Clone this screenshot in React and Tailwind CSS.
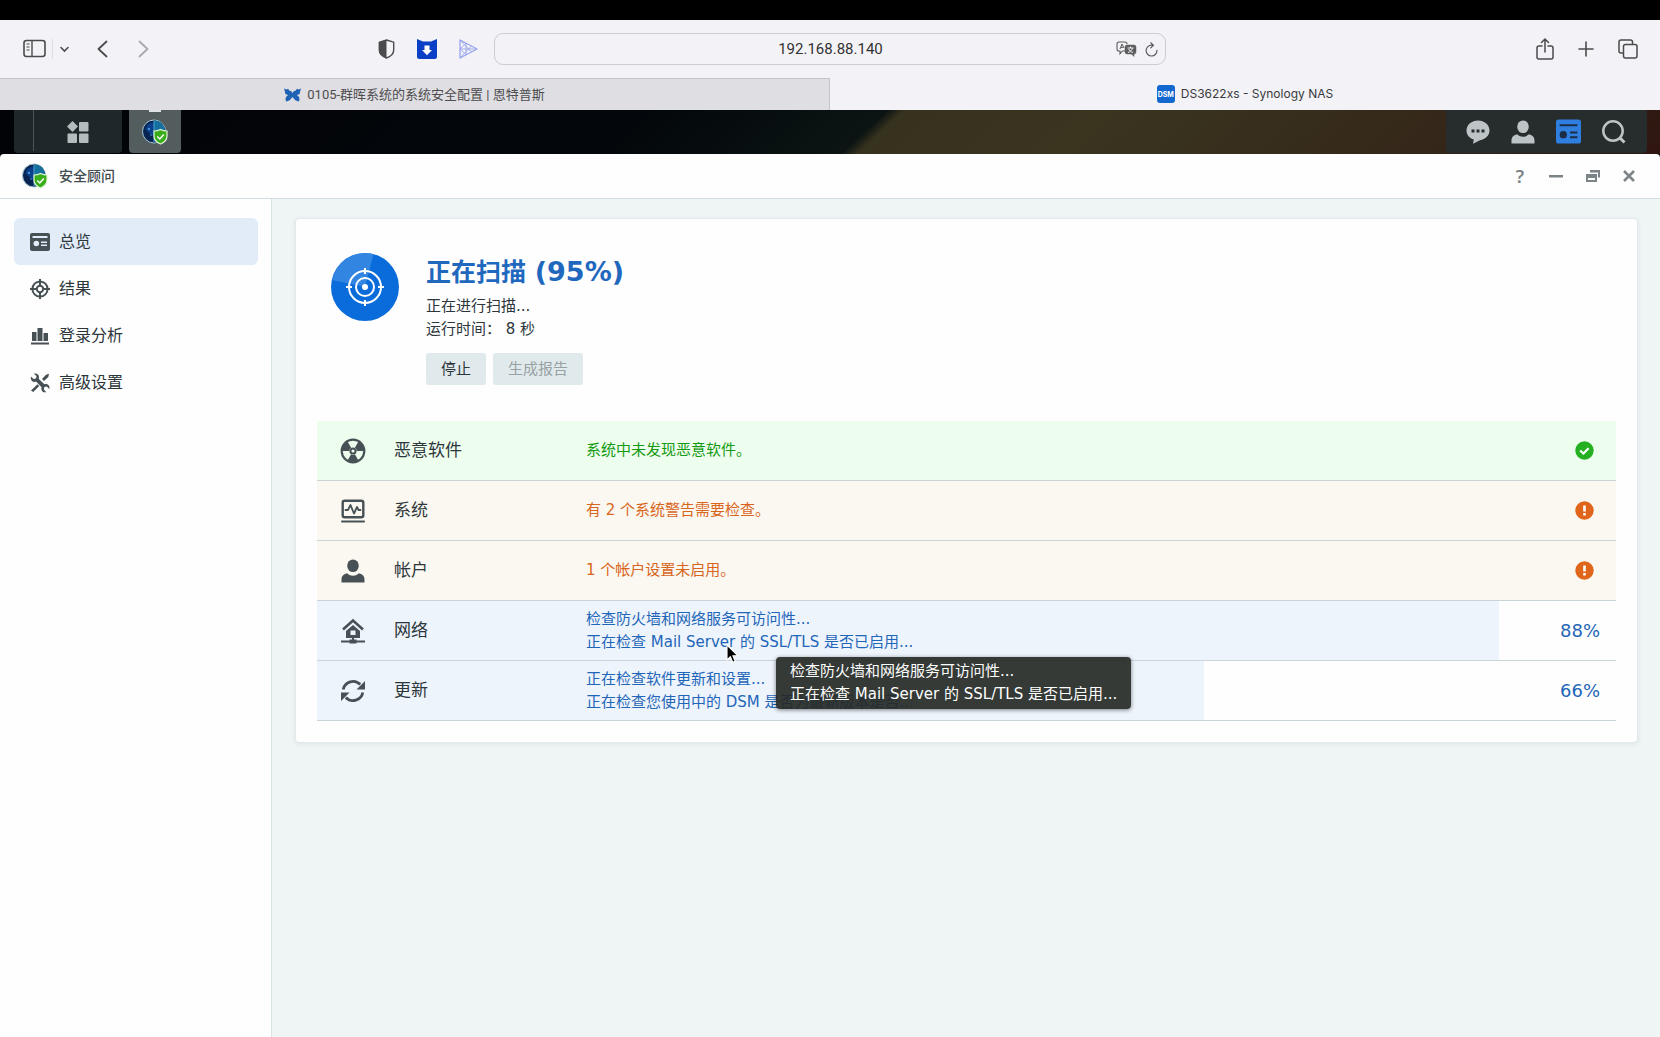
import { useState } from "react";

const SANS = "font-['DejaVu_Sans','Noto_Sans_CJK_SC',sans-serif]";
const UI = "font-['Roboto','Noto_Sans_CJK_SC',sans-serif]";

function SidebarToggleIcon() {
  return (
    <svg width="24" height="20" viewBox="0 0 24 20" fill="none" stroke="#4b4b4d">
      <rect x="1" y="1.5" width="21" height="16" rx="2.5" strokeWidth="1.6" />
      <path d="M9 2v15" strokeWidth="1.4" />
      <path d="M3.5 5h3M3.5 8h3M3.5 11h3" strokeWidth="1.1" />
    </svg>
  );
}

function ChevronIcon({ direction }) {
  const paths = {
    left: "M9.5 1.5L1.5 9l8 7.500",
    right: "M1.5 1.5L9.5 9l-8 7.500",
  };

  return (
    <svg width="11" height="18" viewBox="0 0 11 18" fill="none" stroke="currentColor" strokeWidth="1.8" strokeLinecap="round" strokeLinejoin="round">
      <path d={paths[direction]} />
    </svg>
  );
}

function ShieldHalfIcon() {
  return (
    <svg width="17" height="20" viewBox="0 0 17 20">
      <path d="M8.5 1L15.7 3.2V11c0 4-3.2 6.5-7.2 8-4-1.5-7.2-4-7.2-8V3.2z" fill="#f3f2f6" stroke="#4b4b4d" strokeWidth="1.4" />
      <path d="M8.5 1v18c-4-1.5-7.2-4-7.2-8V3.200z" fill="#4b4b4d" />
    </svg>
  );
}

function DownloaderIcon() {
  return (
    <svg width="20" height="20" viewBox="0 0 20 20">
      <path d="M0 0l6 2.5h8L20 0v17.5a2.5 2.5 0 0 1-2.5 2.5h-15A2.5 2.5 0 0 1 0 17.500z" fill="#0b3fc6" />
      <path d="M7.5 6.500h5v4.500h2.500L10 16.200 5 11h2.500z" fill="#fff" />
    </svg>
  );
}

function MeshPlayIcon() {
  return (
    <svg width="19" height="20" viewBox="0 0 19 20" fill="none" stroke="#97a5ec" strokeLinejoin="round">
      <path d="M1 1l17 9L1 19z" strokeWidth="1.3" />
      <path d="M1 10h17M7 4.200v11.600M1 1l11.500 12M1 19L12.500 7M1 10l6-5.800M1 10l6 5.800" strokeWidth="0.9" />
    </svg>
  );
}

function TranslateIcon() {
  return (
    <svg width="21" height="16" viewBox="0 0 21 16" fill="none" stroke="#5c5c5e">
      <path d="M9 10H6.5L4 12.8V10H3a2 2 0 0 1-2-2V3a2 2 0 0 1 2-2h6a2 2 0 0 1 2 2" strokeWidth="1.1" />
      <path d="M4 8l2-5 2 4M4.8 6.3h2.400" strokeWidth="1" />
      <path d="M11 4h7a2 2 0 0 1 2 2v5a2 2 0 0 1-2 2v2.5L15.5 13H11a2 2 0 0 1-2-2V6a2 2 0 0 1 2-2z" fill="#5c5c5e" strokeWidth="0.5" />
      <path d="M11.5 7h6M14.5 5.5V7M16.5 7c-.5 2-2.5 4-4.5 4.5M12.7 8c.8 1.7 2.3 3 4.3 3.500" stroke="#f3f2f6" strokeWidth="1" />
    </svg>
  );
}

function ReloadIcon() {
  return (
    <svg width="13" height="15" viewBox="0 0 13 15" fill="none" stroke="#5c5c5e" strokeWidth="1.2" strokeLinecap="round">
      <path d="M11.9 8.300A5.400 5.400 0 1 1 6.500 3.200h1.700M5.800.8l2.600 2.400-2.600 2.600" />
    </svg>
  );
}

function ShareIcon() {
  return (
    <svg width="18" height="22" viewBox="0 0 18 22" fill="none" stroke="#4b4b4d" strokeWidth="1.5" strokeLinecap="round" strokeLinejoin="round">
      <path d="M6 8H3a2 2 0 0 0-2 2v9a2 2 0 0 0 2 2h12a2 2 0 0 0 2-2v-9a2 2 0 0 0-2-2h-3M9 14V1M5.5 4.5L9 1l3.500 3.500" />
    </svg>
  );
}

function PlusIcon() {
  return (
    <svg width="16" height="16" viewBox="0 0 16 16" stroke="#4b4b4d" strokeWidth="1.6" strokeLinecap="round">
      <path d="M8 1v14M1 8h14" />
    </svg>
  );
}

function TabsIcon() {
  return (
    <svg width="20" height="20" viewBox="0 0 20 20" fill="none" stroke="#4b4b4d" strokeWidth="1.5">
      <path d="M5 14H3a2 2 0 0 1-2-2V3a2 2 0 0 1 2-2h9.500a2 2 0 0 1 2 2v2" />
      <rect x="5.5" y="5.5" width="13.5" height="13.5" rx="2" />
    </svg>
  );
}

function ButterflyIcon() {
  return (
    <svg width="17" height="14" viewBox="0 0 17 14" fill="#2062b4">
      <path d="M0 .5l2.500 1L4 .8l1.500 2L7 3l1.500 2L10 3l1.500-.2L13 .8l1.500.7L17 .5l-1 3.500-.3 2L13 7l2 2 .5 2-.5 2.500-2-.5-2-1-2.500-3L6 12l-2 1-2 .5L1.500 11 2 9l2-2-2.700-1L1 4z" />
    </svg>
  );
}

function AdvisorIcon() {
  return (
    <svg width="26" height="26" viewBox="0 0 26 26">
      <circle cx="12" cy="12.5" r="11.5" fill="#082450" stroke="#a9c6d2" strokeWidth="1" />
      <path d="M12 1.500a11 11 0 0 1 0 22z" fill="#0a4a7c" />
      <path d="M12 1.500a11 11 0 0 1 11 11H12z" fill="#15709f" />
      <path d="M12 3.500a9 9 0 0 0-8.500 7L12 18z" fill="#0c3f8c" />
      <path d="M12 1.500v22" stroke="#5cb4dc" strokeWidth="0.8" />
      <circle cx="7" cy="10" r="0.9" fill="#5fc4f5" />
      <circle cx="9" cy="16" r="0.8" fill="#4d9fe0" />
      <path d="M18.5 10.500c2 1 4 1.500 6.500 1.500v5c0 4-2.500 6.500-6.500 8-4-1.500-6.500-4-6.500-8v-5c2.500 0 4.500-.5 6.500-1.500z" fill="#3aad1a" stroke="#dff5d5" strokeWidth="1.2" />
      <path d="M15.3 17.500l2.500 2.500 4-4.500" fill="none" stroke="#fff" strokeWidth="1.5" />
    </svg>
  );
}

function AppsIcon() {
  return (
    <svg width="22" height="22" viewBox="0 0 22 22" fill="#b4bcbe">
      <path d="M5.500 0L11 5.500 5.500 11 0 5.500z" />
      <rect x="12" y="1" width="9.5" height="9.5" rx="1" />
      <rect x="0.5" y="12.5" width="9.5" height="9.5" rx="1" />
      <rect x="12" y="12.5" width="9.5" height="9.5" rx="1" />
    </svg>
  );
}

function ChatIcon() {
  return (
    <svg width="24" height="24" viewBox="0 0 24 24">
      <path d="M12 .5c6.300 0 11.500 4.300 11.500 10 0 5-4 8.500-9.500 9.700L7 23.700l.8-4.200C3.500 18.200.5 15 .5 10.500c0-5.700 5.200-10 11.500-10z" fill="#bcc4c6" />
      <path d="M5.500 9.500h3v3h-3zM10.500 9.500h3v3h-3zM15.500 9.500h3v3h-3z" fill="#272d2d" />
    </svg>
  );
}

function UserIcon({ size = 24 }) {
  return (
    <svg width={size} height={size} viewBox="0 0 24 24" fill="currentColor">
      <ellipse cx="12" cy="6.8" rx="5.8" ry="6.3" />
      <path d="M.5 23.500v-3c0-3.500 2.500-6 6-6 1.500 1.500 3.300 2.200 5.500 2.200s4-.7 5.500-2.200c3.500 0 6 2.500 6 6v3z" />
    </svg>
  );
}

function DashboardIcon() {
  return (
    <svg width="25" height="25" viewBox="0 0 24 24">
      <rect x="0" y="0.5" width="24" height="23" rx="2.5" fill="#2f7fe0" />
      <path d="M3.500 5h17v2h-17zM13.500 12h7v2h-7zM13.500 16.500h7v2h-7z" fill="#1c2c45" />
      <circle cx="7" cy="15" r="3.5" fill="#1c2c45" />
    </svg>
  );
}

function SearchIcon() {
  return (
    <svg width="24" height="24" viewBox="0 0 24 24" fill="none" stroke="#bcc4c6" strokeWidth="2.5">
      <circle cx="11" cy="11" r="9.7" />
      <path d="M17.500 17.500l5 5" strokeWidth="3" />
    </svg>
  );
}

function OverviewIcon() {
  return (
    <svg width="20" height="18" viewBox="0 0 20 18">
      <rect width="20" height="18" rx="2" fill="#465055" />
      <path d="M2.500 3h15v2h-15z" fill="#e1ecf8" />
      <circle cx="6.3" cy="10.5" r="2.8" fill="#e1ecf8" />
      <path d="M11 8.500h6V10h-6zM11 11.500h6V13h-6z" fill="#e1ecf8" />
    </svg>
  );
}

function TargetIcon() {
  return (
    <svg width="20" height="20" viewBox="0 0 20 20" fill="none" stroke="#465055" strokeWidth="2">
      <circle cx="10" cy="10" r="7.6" />
      <circle cx="10" cy="10" r="3.2" />
      <path d="M10 0v6M10 14v6M0 10h6M14 10h6" />
    </svg>
  );
}

function ChartIcon() {
  return (
    <svg width="20" height="18" viewBox="0 0 20 18" fill="#465055">
      <path d="M2 5h4.500v9H2zM7.500 1h5v13h-5zM13.500 6H18v8h-4.500zM1 15.500h18v2H1z" />
    </svg>
  );
}

function ToolsIcon() {
  return (
    <svg width="20" height="20" viewBox="0 0 20 20" fill="#465055">
      <path d="M1 3.500L3.500 6 6 5.500 6.500 3 4 .8C6.500 0 9 1.500 9 4.200c0 .6-.1 1-.3 1.500l5.600 5.600c.5-.2 1-.3 1.500-.3 2.800 0 4.200 2.500 3.500 5L16.800 13.500l-2.500.5-.5 2.500 2.500 2.700c-2.500.7-5-.8-5-3.500 0-.5.100-1 .300-1.500L6 8.600c-.5.2-1 .3-1.500.3C1.800 8.900.3 6.200 1 3.500z" />
      <path d="M12 6l4-4.300L19 .8 18.300 4 14 8zM7.500 11.300l1.700 1.700-6 6-2.200-1.500z" />
    </svg>
  );
}

function RadiationIcon() {
  return (
    <svg width="26" height="26" viewBox="0 0 26 26">
      <circle cx="13" cy="13" r="11.3" fill="none" stroke="#465055" strokeWidth="2.2" />
      <path d="M9.200 12.900L2.300 13A10.700 10.700 0 0 1 7.700 3.800L11.100 9.800A3.800 3.800 0 0 0 9.200 12.900zM14.900 9.800L18.300 3.800A10.700 10.700 0 0 1 23.700 13H16.800A3.800 3.800 0 0 0 14.900 9.800zM14.900 16.300l3.400 6a10.700 10.700 0 0 1-10.600 0l3.400-6a3.800 3.800 0 0 0 3.800 0z" fill="#465055" />
      <circle cx="13" cy="13" r="2.6" fill="none" stroke="#465055" strokeWidth="2" />
    </svg>
  );
}

function MonitorIcon() {
  return (
    <svg width="24" height="24" viewBox="0 0 24 24" fill="none" stroke="#465055" strokeLinejoin="round" strokeLinecap="round">
      <rect x="1.7" y="1.7" width="20.6" height="16.6" rx="2" strokeWidth="2.4" />
      <path d="M4.500 11H7l2.500-5 3.500 8.500L16 8l1.500 3h2" strokeWidth="1.8" />
      <path d="M1 22.500h22" strokeWidth="2" />
    </svg>
  );
}

function HomeNetworkIcon() {
  return (
    <svg width="24" height="26" viewBox="0 0 24 26">
      <path d="M2 11.500L12 2.500l10 9" fill="none" stroke="#465055" strokeWidth="2.6" />
      <path d="M12 7l7 6v7H5v-7z" fill="#465055" />
      <rect x="9.5" y="12.5" width="5" height="4.5" fill="#edf4fc" />
      <path d="M11 19h2v3.500h-2zM0 22.500h24v2H0zM8.500 21.500h7v4h-7z" fill="#465055" />
    </svg>
  );
}

function RefreshIcon() {
  return (
    <svg width="24" height="24" viewBox="0 0 24 24">
      <path d="M2.200 10.500a10 10 0 0 1 17-5M21.800 13.500a10 10 0 0 1-17 5" fill="none" stroke="#465055" strokeWidth="2.8" />
      <path d="M24 2v8.500h-8.500zM0 22v-8.500h8.500z" fill="#465055" />
    </svg>
  );
}

function OkIcon() {
  return (
    <svg width="19" height="19" viewBox="0 0 19 19" role="img" aria-label="安全">
      <circle cx="9.5" cy="9.5" r="9.2" fill="#25b022" />
      <path d="M5.200 9.500l3.200 3 5.200-5.300" fill="none" stroke="#fff" strokeWidth="2.2" />
    </svg>
  );
}

function WarningIcon() {
  return (
    <svg width="19" height="19" viewBox="0 0 19 19" role="img" aria-label="警告">
      <circle cx="9.5" cy="9.5" r="9.2" fill="#df651a" />
      <path d="M8.200 4.500h2.600v6H8.200zM8.200 12h2.600v2.500H8.200z" fill="#fff" />
    </svg>
  );
}

function ScanIcon() {
  return (
    <svg width="68" height="68" viewBox="0 0 68 68">
      <circle cx="34" cy="34" r="34" fill="#0a6cdb" />
      <path d="M34 34L1 27A34 34 0 0 1 42.500 1.100z" fill="#3385e2" />
      <g fill="none" stroke="#fff" strokeWidth="2">
        <circle cx="34" cy="34" r="16" />
        <circle cx="34" cy="34" r="9" />
        <path d="M34 15v6M34 47v6M15 34h6M47 34h6" />
      </g>
      <circle cx="34" cy="34" r="3" fill="#fff" />
    </svg>
  );
}

function CursorIcon() {
  return (
    <svg width="13" height="20" viewBox="0 0 13 20">
      <path d="M1 1v15l3.400-3.200 2.300 5.500 2.500-1-2.300-5.500H12z" fill="#000" stroke="#fff" strokeWidth="1.1" />
    </svg>
  );
}

function BrowserToolbar() {
  const [address, setAddress] = useState("192.168.88.140");

  return (
    <header className="grid h-[58px] grid-cols-[1fr_40.5%_1fr] items-center bg-[#f3f2f6]">
      <div className="flex items-center justify-between pl-[23px] pr-4">
        <div className="flex items-center">
          <button aria-label="边栏">
            <SidebarToggleIcon />
          </button>
          <button aria-label="标签页组" className="ml-[5px] flex h-5 items-center border-l border-[#dedde1] pl-[7px]">
            <svg width="9" height="7" viewBox="0 0 9 7" fill="none" stroke="#4b4b4d" strokeWidth="1.6" strokeLinecap="round">
              <path d="M1 1.500l3.500 3.500L8 1.500" />
            </svg>
          </button>
          <button aria-label="后退" className="ml-7 text-[#4b4b4d]">
            <ChevronIcon direction="left" />
          </button>
          <button aria-label="前进" className="ml-[30px] text-[#a9a8ac]">
            <ChevronIcon direction="right" />
          </button>
        </div>
        <div className="flex items-center gap-[22px]">
          <button aria-label="隐私报告">
            <ShieldHalfIcon />
          </button>
          <button aria-label="下载扩展">
            <DownloaderIcon />
          </button>
          <button aria-label="播放扩展">
            <MeshPlayIcon />
          </button>
        </div>
      </div>
      <div className="flex h-8 items-center gap-2 rounded-[9px] border border-[#cdccd0] pl-[58px] pr-[7px]">
        <input
          aria-label="地址"
          className="min-w-0 flex-1 bg-transparent text-center text-[15px] text-[#333335] outline-none"
          value={address}
          onChange={(event) => setAddress(event.target.value)}
        />
        <button aria-label="翻译">
          <TranslateIcon />
        </button>
        <button aria-label="重新载入">
          <ReloadIcon />
        </button>
      </div>
      <div className="flex items-center justify-end gap-6 pr-[22px]">
        <button aria-label="共享">
          <ShareIcon />
        </button>
        <button aria-label="新建标签页">
          <PlusIcon />
        </button>
        <button aria-label="标签页概览">
          <TabsIcon />
        </button>
      </div>
    </header>
  );
}

function BrowserTabs() {
  return (
    <nav className="grid h-8 grid-cols-2 text-[13px] leading-none">
      <button className="flex items-center justify-center gap-[6px] border-r border-t border-[#c4c3c7] bg-[#dfdee2] text-[#4d4d4f]">
        <ButterflyIcon />
        <span>0105-群晖系统的系统安全配置 | 恩特普斯</span>
      </button>
      <button className="flex items-center justify-center gap-[6px] bg-[#f3f2f6] font-['Inter',sans-serif] text-[12px] text-[#3a3a3c]">
        <span className="flex h-[18px] w-[18px] items-center justify-center rounded-[3px] bg-[#1268cf] text-[7px] font-bold text-white">
          DSM
        </span>
        <span>DS3622xs - Synology NAS</span>
      </button>
    </nav>
  );
}

function Taskbar() {
  return (
    <div className="flex h-11 justify-between bg-[linear-gradient(137deg,#020307_0%,#03070b_38%,#0b1413_52%,#37321e_53%,#39351f_65%,#35281a_85%,#2f1510_100%)] pl-[14px] pr-[13px]">
      <div className="flex gap-[7px]">
        <div className="flex h-[43px] w-[108px] rounded-b-sm bg-[#20272a]">
          <div className="mb-0.5 w-5 border-r border-[#4c5356]" />
          <button aria-label="主菜单" className="flex flex-1 items-center justify-center">
            <AppsIcon />
          </button>
        </div>
        <button aria-label="安全顾问" className="flex h-[43px] w-[52px] flex-col items-center rounded-b-sm bg-[#535d5d]">
          <span className="mb-[7px] h-0.5 w-3 bg-[#dfe3e3]" />
          <AdvisorIcon />
        </button>
      </div>
      <div className="flex h-[43px] w-[201px] items-center justify-center gap-[21px] rounded-b-sm bg-[#272d2d] pr-0.5">
        <button aria-label="消息">
          <ChatIcon />
        </button>
        <button aria-label="用户" className="text-[#bcc4c6]">
          <UserIcon />
        </button>
        <button aria-label="小工具">
          <DashboardIcon />
        </button>
        <button aria-label="搜索">
          <SearchIcon />
        </button>
      </div>
    </div>
  );
}

function TitleBar() {
  return (
    <div className="flex h-[45px] items-center justify-between rounded-t border-b border-[#d5dfe3] bg-[#fdfefd] pl-[22px] pr-[25px]">
      <div className="flex items-center gap-[11px]">
        <AdvisorIcon />
        <h1 className="text-[14px] font-medium leading-5 text-[#414b50]">安全顾问</h1>
      </div>
      <div className="flex items-center gap-[23px] text-[#7c8487]">
        <button aria-label="帮助" className="w-3 text-center font-['Noto_Sans',sans-serif] text-[18px] font-semibold leading-5">
          ?
        </button>
        <button aria-label="最小化">
          <svg width="14" height="14" viewBox="0 0 14 14" fill="currentColor">
            <path d="M0 6h14v2.500H0z" />
          </svg>
        </button>
        <button aria-label="还原">
          <svg width="14" height="14" viewBox="0 0 14 14" fill="currentColor">
            <path d="M4 1h10v7.500h-2V3.500H4z" />
            <path fillRule="evenodd" d="M0 5h11v8H0zM2 9v2h7V9z" />
          </svg>
        </button>
        <button aria-label="关闭">
          <svg width="12" height="12" viewBox="0 0 12 12" fill="none" stroke="currentColor" strokeWidth="2.5">
            <path d="M1 1l10 10M11 1L1 11" />
          </svg>
        </button>
      </div>
    </div>
  );
}

const NAV_ITEMS = [
  { id: "overview", label: "总览", Icon: OverviewIcon },
  { id: "results", label: "结果", Icon: TargetIcon },
  { id: "login", label: "登录分析", Icon: ChartIcon },
  { id: "advanced", label: "高级设置", Icon: ToolsIcon },
];

function Sidebar() {
  const [active, setActive] = useState("overview");

  return (
    <nav className="w-[272px] shrink-0 border-r border-[#d9e2e5] bg-[#fdfefd] pl-[14px] pr-[13px] pt-[19px]">
      {NAV_ITEMS.map(({ id, label, Icon }) => (
        <button
          key={id}
          className={`flex h-[47px] w-full items-center gap-[9px] rounded-md pl-4 text-[16px] text-[#2d363b] ${
            id === active ? "bg-[#e1ecf8]" : ""
          }`}
          onClick={() => setActive(id)}
        >
          <Icon />
          {label}
        </button>
      ))}
    </nav>
  );
}

const CHECKS = [
  {
    label: "恶意软件",
    Icon: RadiationIcon,
    state: "safe",
    messages: ["系统中未发现恶意软件。"],
  },
  {
    label: "系统",
    Icon: MonitorIcon,
    state: "warning",
    messages: ["有 2 个系统警告需要检查。"],
  },
  {
    label: "帐户",
    Icon: UserIcon,
    state: "warning",
    messages: ["1 个帐户设置未启用。"],
  },
  {
    label: "网络",
    Icon: HomeNetworkIcon,
    state: "running",
    progress: "88%",
    fill: 91,
    messages: [
      "检查防火墙和网络服务可访问性...",
      "正在检查 Mail Server 的 SSL/TLS 是否已启用...",
    ],
    hovered: true,
  },
  {
    label: "更新",
    Icon: RefreshIcon,
    state: "running",
    progress: "66%",
    fill: 68.3,
    messages: [
      "正在检查软件更新和设置...",
      "正在检查您使用中的 DSM 是否为最新版本是否...",
    ],
  },
];

const ROW_COLORS = {
  safe: "bg-[#edfdee]",
  warning: "bg-[#faf8f0]",
  running: "bg-[#fdfefd]",
};

const TEXT_COLORS = {
  safe: "text-[#149a10]",
  warning: "text-[#d9651d]",
  running: "text-[#1f66b9]",
};

function CheckRow({ check }) {
  const { label, Icon, state, messages, progress, fill, hovered } = check;

  return (
    <tr
      className={`h-[60px] ${ROW_COLORS[state]}`}
      style={
        fill
          ? { backgroundImage: `linear-gradient(to right, #edf4fc ${fill}%, transparent ${fill}%)` }
          : undefined
      }
    >
      <th scope="row" className="w-[269px] border-b border-[#c9d3d8] p-0 font-normal">
        <div className="flex items-center gap-[17px] pl-6 text-[17px] text-[#2d363b]">
          <span className="flex w-6 justify-center text-[#465055] [&>svg]:shrink-0">
            <Icon />
          </span>
          <span className="pl-3">{label}</span>
        </div>
      </th>
      <td className={`relative border-b border-[#c9d3d8] p-0 text-[15px] leading-[23px] ${TEXT_COLORS[state]}`}>
        {messages.map((message) => (
          <p key={message}>{message}</p>
        ))}
        {hovered && (
          <>
            <div
              role="tooltip"
              className="absolute left-[190px] top-[56px] z-10 whitespace-nowrap rounded bg-[#252926]/92 px-[14px] py-[3px] text-white shadow-[0_1px_4px_rgba(0,0,0,0.5)]"
            >
              {messages.map((message) => (
                <p key={message}>{message}</p>
              ))}
            </div>
            <span className="absolute left-[140px] top-[43px] z-10">
              <CursorIcon />
            </span>
          </>
        )}
      </td>
      <td className={`w-24 border-b border-[#c9d3d8] p-0 text-right text-[18px] ${TEXT_COLORS[state]}`}>
        {state === "running" ? (
          <span className="pr-4">{progress}</span>
        ) : (
          <span className="flex justify-end pr-[22px]">
            {state === "safe" ? <OkIcon /> : <WarningIcon />}
          </span>
        )}
      </td>
    </tr>
  );
}

function Overview() {
  return (
    <main className="flex-1 bg-[#eff4f4] pl-[23px] pr-[22px] pt-[19px]">
      <section className="rounded border border-[#e1e9ea] bg-[#fdfefd] px-[21px] pb-[21px] shadow-[0_1px_4px_rgba(120,150,160,0.15)]">
        <div className="flex gap-[27px] pl-[14px] pt-[34px]">
          <ScanIcon />
          <div className="text-[15px] leading-[23px] text-[#2d363b]">
            <h2 className="mb-[3px] text-[25px] font-bold leading-[38px] text-[#1f68bd]">
              正在扫描 <span className="text-[27px]">(95%)</span>
            </h2>
            <p>正在进行扫描...</p>
            <p>运行时间： 8 秒</p>
            <div className="mt-3 flex gap-[7px]">
              <button className="h-8 rounded-[3px] bg-[#e0e9eb] px-[15px]">停止</button>
              <button className="h-8 rounded-[3px] bg-[#e0e9eb] px-[15px] text-[#98a1a3]" disabled>
                生成报告
              </button>
            </div>
          </div>
        </div>
        <table className="mt-9 w-full border-separate border-spacing-0 text-left">
          <tbody>
            {CHECKS.map((check) => (
              <CheckRow key={check.label} check={check} />
            ))}
          </tbody>
        </table>
      </section>
    </main>
  );
}

export default function App() {
  return (
    <div className={`flex min-h-screen flex-col bg-black pt-5 ${UI}`}>
      <BrowserToolbar />
      <BrowserTabs />
      <Taskbar />
      <div className={`flex flex-1 flex-col ${SANS}`}>
        <TitleBar />
        <div className="flex flex-1">
          <Sidebar />
          <Overview />
        </div>
      </div>
    </div>
  );
}
